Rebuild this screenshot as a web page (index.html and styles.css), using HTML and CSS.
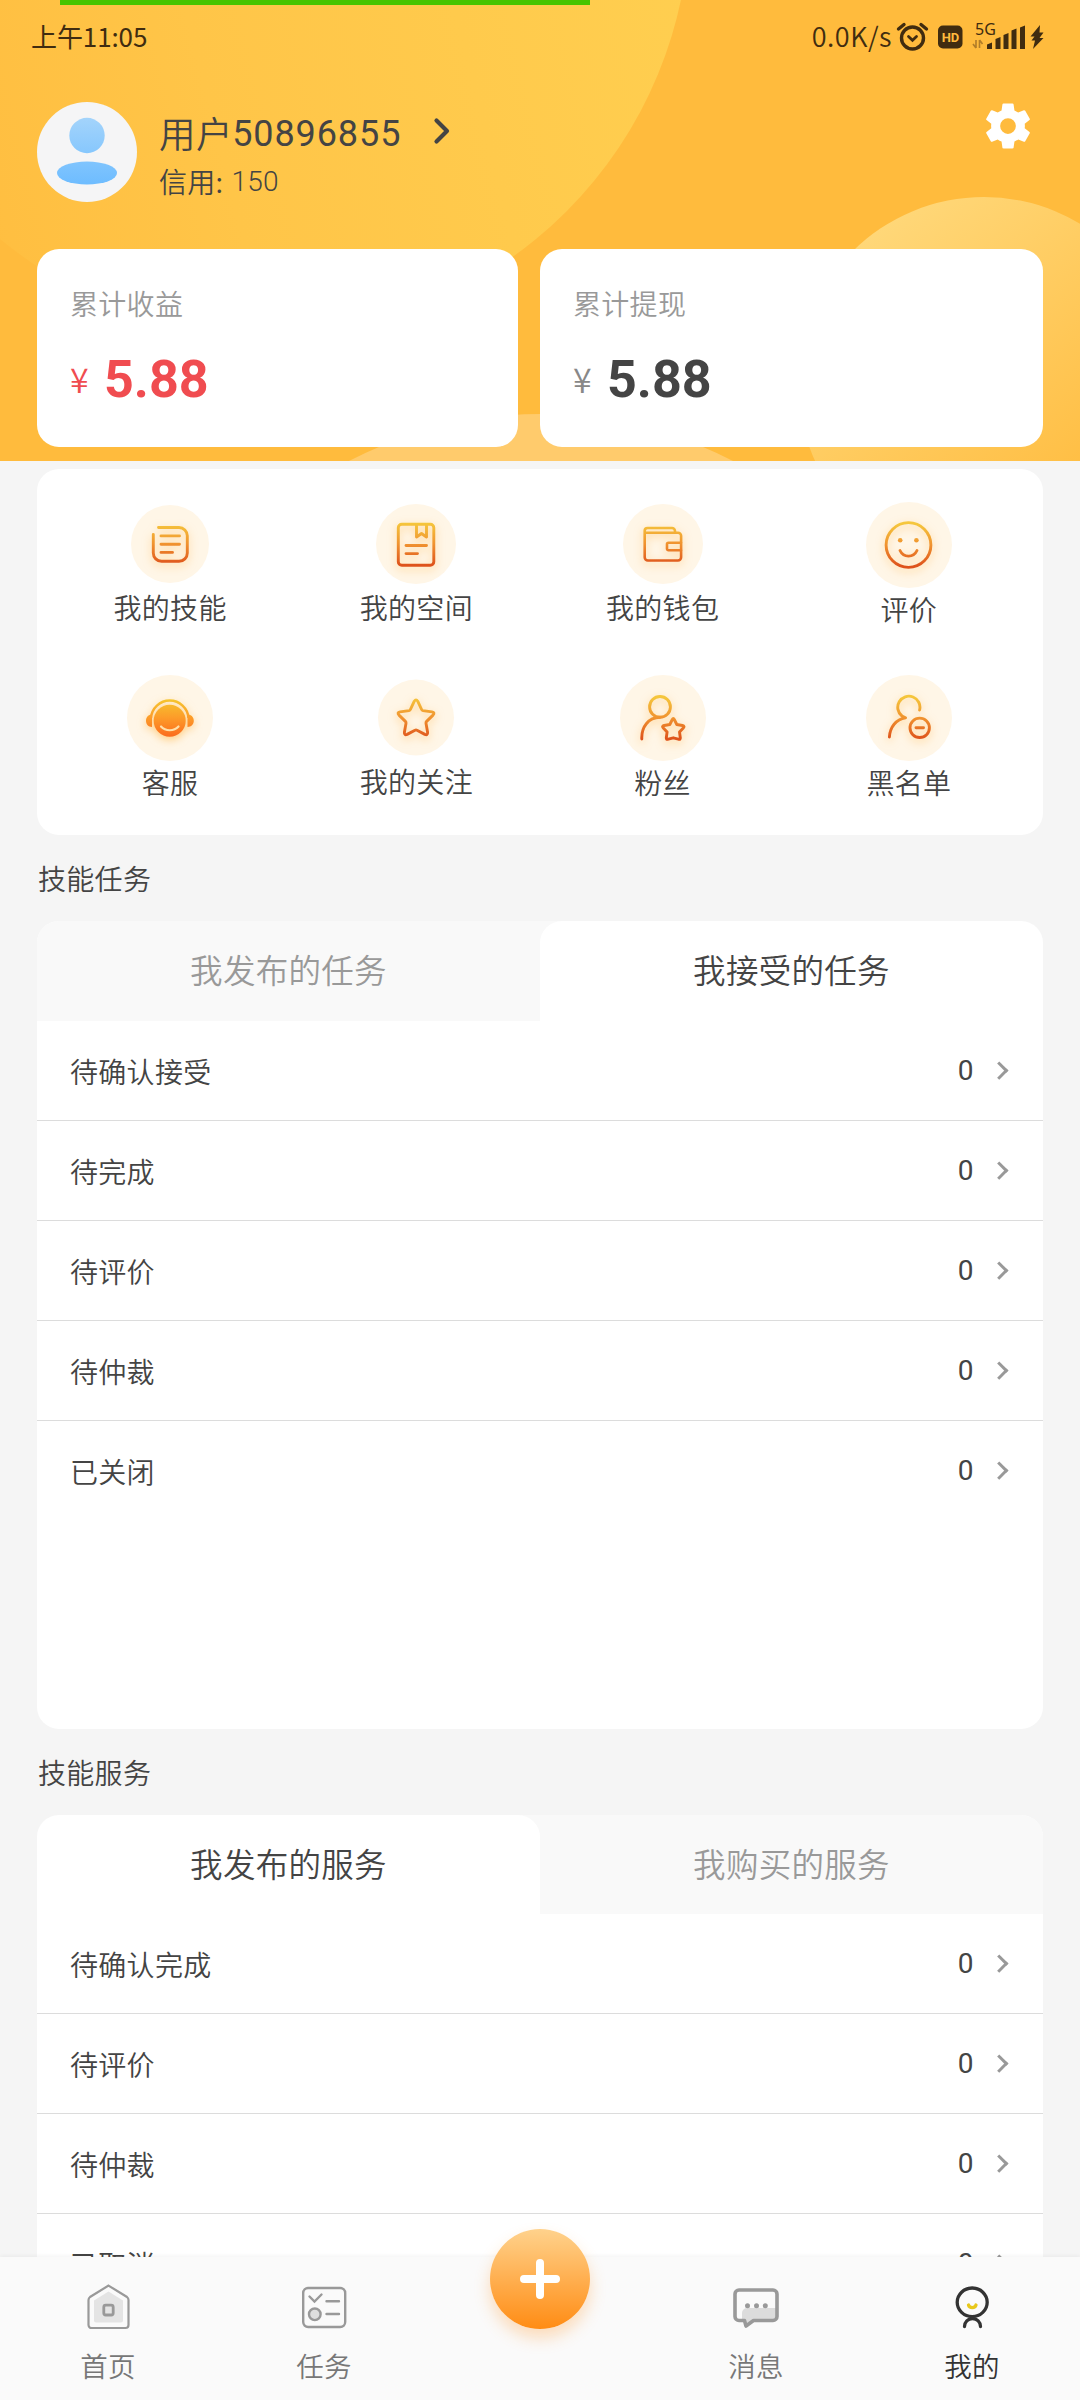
FILE: index.html
```html
<!DOCTYPE html>
<html lang="zh-CN">
<head>
<meta charset="utf-8">
<title>我的</title>
<link rel="stylesheet" href="styles.css">
</head>
<body>
<main class="page">
  <header class="hero">
    <svg class="hero-bg" viewBox="0 0 1080 461" aria-hidden="true">
      <defs>
        <linearGradient id="bubbleA" x1="0" y1=".7" x2="1" y2=".45"><stop offset=".1" stop-color="#ffbe40"/><stop offset=".4" stop-color="#ffc548"/><stop offset="1" stop-color="#ffcf50"/></linearGradient>
        <linearGradient id="bubbleB" x1=".2" y1=".1" x2=".8" y2=".85"><stop offset="0" stop-color="#ffd778"/><stop offset="1" stop-color="#ffbb3d"/></linearGradient>
      </defs>
      <circle cx="268" cy="-87" r="422" fill="url(#bubbleA)"/>
      <circle cx="984" cy="383" r="186" fill="url(#bubbleB)"/>
      <circle cx="541" cy="830" r="416" fill="#ffcb6c"/>
    </svg>
    <div class="progress"></div>

    <div class="status">
      <span class="status-time">上午11:05</span>
      <div class="status-right">
        <span class="status-speed">0.0K/s</span>
        <svg width="150" height="30" viewBox="0 0 150 30">
          <g fill="none" stroke="#402c10" stroke-linecap="round">
            <circle cx="16.500" cy="17" r="11" stroke-width="3.400"/>
            <path d="M12.500 15.500l4 3.800 4-3.800" stroke-width="2.800"/>
            <path d="M2.500 8l5.500-4.500M30.500 8l-5.500-4.500" stroke-width="3.400"/>
          </g>
          <rect x="42" y="4.500" width="24.500" height="23" rx="5" fill="#402c10"/>
          <text x="54.500" y="20.500" class="status-hd">HD</text>
          <text x="79" y="14" class="status-net">5G</text>
          <path d="M80 27v-8m0 8l-3-4M83.500 19v8m0-8l3 4" fill="none" stroke="#b07c28" stroke-width="1.600"/>
          <path d="M91 28v-4.500l5-2V28zM99.500 28V18l5-2v12zM107.500 28V14l5-2v16zM115.500 28V9.500l5-2V28zM124 28V6.500l5-2V28z" fill="#402c10"/>
          <path d="M144 4l-9.500 11.500h4l-3 4h3.500l-2 8.500L147.500 17h-4l4-5.500h-4z" fill="#402c10"/>
        </svg>
      </div>
    </div>

    <div class="profile">
      <svg class="avatar" width="100" height="100" viewBox="0 0 100 100">
        <defs><linearGradient id="av" gradientUnits="userSpaceOnUse" x1="0" y1="15" x2="0" y2="83"><stop stop-color="#a4d4fb"/><stop offset="1" stop-color="#6dbcff"/></linearGradient></defs>
        <circle cx="50" cy="50" r="50" fill="#f5f5f6"/>
        <circle cx="50" cy="33.500" r="17.700" fill="url(#av)"/>
        <ellipse cx="50" cy="71" rx="30" ry="11.500" fill="url(#av)"/>
      </svg>
      <div class="who">
        <div class="who-name"><span>用户</span><span class="num">50896855</span>
          <svg width="20" height="28" viewBox="0 0 20 28"><path d="M3.500 3.500L14 14 3.500 24.500" fill="none" stroke="#444" stroke-width="4.200" stroke-linecap="round" stroke-linejoin="round"/></svg>
        </div>
        <div class="who-credit"><span>信用:</span><span class="num thin">150</span></div>
      </div>
      <svg class="gear" width="54" height="54" viewBox="0 0 24 24"><path fill="#fff" d="M19.430 12.980c.040-.320.070-.640.070-.980s-.030-.660-.070-.980l2.110-1.650c.190-.150.240-.420.120-.640l-2-3.460c-.120-.220-.390-.300-.610-.220l-2.490 1c-.520-.400-1.080-.730-1.690-.980l-.380-2.650C14.460 2.180 14.250 2 14 2h-4c-.250 0-.460.180-.490.420l-.380 2.650c-.610.250-1.170.590-1.690.980l-2.490-1c-.230-.090-.490 0-.610.220l-2 3.460c-.130.220-.070.490.120.640l2.110 1.650c-.040.320-.070.650-.070.980s.030.660.070.980l-2.110 1.650c-.190.150-.240.420-.120.640l2 3.460c.120.220.390.300.610.220l2.490-1c.520.400 1.080.730 1.690.980l.380 2.650c.030.240.240.420.490.420h4c.250 0 .460-.180.490-.420l.380-2.650c.610-.250 1.170-.590 1.690-.980l2.490 1c.230.090.490 0 .610-.220l2-3.460c.120-.220.070-.490-.120-.640l-2.110-1.650zM12 15.500a3.500 3.500 0 1 1 0-7 3.500 3.500 0 0 1 0 7z"/></svg>
    </div>

    <div class="balances">
      <section class="balance earned">
        <h2>累计收益</h2>
        <p><span class="yen">¥</span><span class="sum">5.88</span></p>
      </section>
      <section class="balance withdrawn">
        <h2>累计提现</h2>
        <p><span class="yen">¥</span><span class="sum">5.88</span></p>
      </section>
    </div>
  </header>

  <nav class="menu">
    <a class="menu-item">
      <svg class="menu-icon" viewBox="0 0 86 86">
        <defs><linearGradient id="ink" gradientUnits="userSpaceOnUse" x1="0" y1="22" x2="0" y2="64"><stop offset="0" stop-color="#f5c63c"/><stop offset=".5" stop-color="#f0922f"/><stop offset="1" stop-color="#de521b"/></linearGradient></defs>
        <circle cx="43" cy="43" r="39" class="disc"/>
        <g class="ink"><path d="M31.500 26.500H52a8.300 8.300 0 0 1 8.300 8.300V52a8.300 8.300 0 0 1-8.300 8.300H34.600a8.300 8.300 0 0 1-8.300-8.300V33.500"/><path d="M34 34.900h18.500M34 43.200h18.500M34 51.400h11.500"/></g>
      </svg>
      <span>我的技能</span>
    </a>
    <a class="menu-item">
      <svg class="menu-icon" viewBox="0 0 86 86">
        <circle cx="43" cy="43" r="40" class="disc"/>
        <g class="ink"><rect x="25.300" y="23.300" width="35.500" height="41" rx="3.500"/><path d="M43.500 24v12l5-3.500 5 3.500V24M33 44.500h20.500M33 52.600h11.500"/></g>
      </svg>
      <span>我的空间</span>
    </a>
    <a class="menu-item">
      <svg class="menu-icon" viewBox="0 0 86 86">
        <circle cx="43" cy="43" r="40" class="disc"/>
        <g class="ink thin-ink"><path d="M55 31.500V30a3 3 0 0 0-3-3H27.500a2.800 2.800 0 0 0-2.800 2.800v26.500a3.200 3.200 0 0 0 3.200 3.200h30a3.200 3.200 0 0 0 3.200-3.200V34.700a3 3 0 0 0-3-3H25.500"/><path d="M61 41.700H48.500a1.500 1.500 0 0 0-1.500 1.500v4.500a1.500 1.500 0 0 0 1.500 1.500H61"/></g>
      </svg>
      <span>我的钱包</span>
    </a>
    <a class="menu-item large low">
      <svg class="menu-icon" viewBox="0 0 86 86">
        <circle cx="43" cy="43" r="43" class="disc"/>
        <g class="ink"><circle cx="42.500" cy="43" r="22.400"/><path d="M34 48.500c3.500 7.500 13.500 7.500 17 0"/></g>
        <circle cx="34.200" cy="38.300" r="2.300" fill="url(#ink)"/><circle cx="50.400" cy="38.300" r="2.300" fill="url(#ink)"/>
      </svg>
      <span>评价</span>
    </a>
    <a class="menu-item large">
      <svg class="menu-icon" viewBox="0 0 86 86">
        <defs><linearGradient id="face" gradientUnits="userSpaceOnUse" x1="0" y1="24" x2="0" y2="62"><stop offset="0" stop-color="#f5c62f"/><stop offset=".5" stop-color="#fd9b29"/><stop offset="1" stop-color="#fb6a1d"/></linearGradient></defs>
        <circle cx="43" cy="43" r="43" class="disc"/>
        <g class="glow" fill="url(#face)">
          <circle cx="42.700" cy="45.700" r="16"/>
          <path d="M25 39.500v12.400c-3.600-.1-6-2.600-6-6.200s2.400-6.200 6-6.200zM60.500 39.500v12.400c3.700-.1 6.300-2.600 6.300-6.200s-2.600-6.200-6.300-6.200z"/>
          <path d="M24 43a18.800 18.800 0 0 1 37.500 0" fill="none" stroke="url(#face)" stroke-width="2.500"/>
        </g>
        <path d="M34 51.500c4.500 5 13 5 17.500 0" fill="none" stroke="#ffe0a8" stroke-width="2.200" stroke-linecap="round"/>
      </svg>
      <span>客服</span>
    </a>
    <a class="menu-item">
      <svg class="menu-icon" viewBox="0 0 86 86">
        <circle cx="43" cy="42.500" r="38" class="disc"/>
        <g class="ink"><path d="M41.300 26.200Q43 23.500 44.700 26.200L48.600 34.500Q49 35.400 50 35.600L59 36.900Q62.300 37.600 60 40.100L53.600 46.400Q52.800 47.200 53 48.200L54.600 57.300Q54.800 60.600 51.900 59.400L44 55.200Q43 54.700 42 55.200L34.100 59.400Q31.200 60.600 31.400 57.300L33 48.200Q33.200 47.200 32.400 46.400L26 40.100Q23.700 37.600 27 36.900L36 35.600Q37 35.400 37.400 34.500Z"/></g>
      </svg>
      <span>我的关注</span>
    </a>
    <a class="menu-item large">
      <svg class="menu-icon" viewBox="0 0 86 86">
        <circle cx="43" cy="43" r="43" class="disc"/>
        <g class="ink"><circle cx="40" cy="31.900" r="10.400"/><path d="M21.800 64c-.5-12 6.500-21.500 18.200-21.700"/><path d="M52.300 44.500Q53.300 42.300 54.300 44.500L56.800 49.500L62.500 50.500Q65 51.300 63.300 53L59.500 57L60.300 62.700Q60.500 65 58.300 64.200L53.300 62.800L48.300 64.200Q46.100 65 46.300 62.700L47.100 57L43.300 53Q41.600 51.300 44.100 50.500L49.800 49.500Z"/></g>
      </svg>
      <span>粉丝</span>
    </a>
    <a class="menu-item large">
      <svg class="menu-icon" viewBox="0 0 86 86">
        <circle cx="43" cy="43" r="43" class="disc"/>
        <g class="ink"><path d="M53.600 35A11.100 11.100 0 1 0 36 41L39.500 42.800C30 44.500 24 52 23.400 62"/><circle cx="53.700" cy="52.800" r="9.700"/><path d="M50 52.800h7.500"/></g>
      </svg>
      <span>黑名单</span>
    </a>
  </nav>

  <h3 class="section-title">技能任务</h3>
  <section class="panel tasks">
    <div class="tabs"><div class="tab">我发布的任务</div><div class="tab active">我接受的任务</div></div>
    <div class="row"><span>待确认接受</span><b>0</b><i class="chev"></i></div>
    <div class="row"><span>待完成</span><b>0</b><i class="chev"></i></div>
    <div class="row"><span>待评价</span><b>0</b><i class="chev"></i></div>
    <div class="row"><span>待仲裁</span><b>0</b><i class="chev"></i></div>
    <div class="row last"><span>已关闭</span><b>0</b><i class="chev"></i></div>
  </section>

  <h3 class="section-title">技能服务</h3>
  <section class="panel services">
    <div class="tabs"><div class="tab active">我发布的服务</div><div class="tab">我购买的服务</div></div>
    <div class="row"><span>待确认完成</span><b>0</b><i class="chev"></i></div>
    <div class="row"><span>待评价</span><b>0</b><i class="chev"></i></div>
    <div class="row"><span>待仲裁</span><b>0</b><i class="chev"></i></div>
    <div class="row last"><span>已取消</span><b>0</b><i class="chev"></i></div>
  </section>
</main>

<footer class="tabbar">
  <a class="tabbar-item">
    <svg width="48" height="48" viewBox="0 0 48 48">
      <path d="M24.500 9.500L39 18.500V38.500a2 2 0 0 1-2 2H12a2 2 0 0 1-2-2V18.500z" fill="#e4e4e4"/>
      <path d="M24.500 3.600L43 15a4 4 0 0 1 1.500 3.200V43a3 3 0 0 1-3 3H7.500a3 3 0 0 1-3-3V18.200A4 4 0 0 1 6 15z" fill="none" stroke="#999" stroke-width="2.200"/>
      <rect x="19.800" y="23.200" width="9.400" height="9.800" rx="2" fill="#e4e4e4" stroke="#999" stroke-width="2.800"/>
    </svg>
    <span>首页</span>
  </a>
  <a class="tabbar-item">
    <svg width="48" height="48" viewBox="0 0 48 48" fill="none" stroke="#999" stroke-width="2.400" stroke-linecap="round">
      <rect x="3.200" y="6" width="42" height="39" rx="5"/>
      <path d="M9.500 14.500l5 5 7-7M26.500 19.300h12.500M26.500 32h12.500"/>
      <circle cx="14.800" cy="32.300" r="5.800" fill="#dedede"/>
    </svg>
    <span>任务</span>
  </a>
  <div class="tabbar-item">
    <div class="fab"><svg width="44" height="44" viewBox="0 0 44 44"><path d="M22 6v32M6 22h32" stroke="#fff" stroke-width="8" stroke-linecap="round"/></svg></div>
  </div>
  <a class="tabbar-item">
    <svg width="48" height="48" viewBox="0 0 48 48">
      <path d="M10 31a5 5 0 0 1 5-5H44v12H20l-7 5-3-5z" fill="#dcdcdc"/>
      <path d="M7 8h34a4 4 0 0 1 4 4v22.500a4 4 0 0 1-4 4H21.500l-7.500 5.500-1.500-5.500H7a4 4 0 0 1-4-4V12a4 4 0 0 1 4-4z" fill="none" stroke="#999" stroke-width="3.600" stroke-linejoin="round"/>
      <g fill="#999"><circle cx="15.500" cy="23.700" r="2.500"/><circle cx="24.500" cy="23.700" r="2.500"/><circle cx="33.300" cy="23.700" r="2.500"/></g>
    </svg>
    <span>消息</span>
  </a>
  <a class="tabbar-item current">
    <svg width="48" height="48" viewBox="0 0 48 48" fill="none" stroke="#333" stroke-width="3.300" stroke-linecap="round">
      <ellipse cx="24.200" cy="20.300" rx="15" ry="14.300"/>
      <path d="M16.500 44.500c0-4.500 3.500-8 8-8s8 3.500 8 8"/>
      <path d="M20.500 23c1 3.500 6.500 3.500 7.500 0" stroke="#e8c81c"/>
    </svg>
    <span>我的</span>
  </a>
</footer>
</body>
</html>
```
FILE: styles.css
```css
* { box-sizing: border-box; margin: 0; padding: 0; }

body {
  width: 1080px;
  height: 2400px;
  display: flex;
  flex-direction: column;
  overflow: hidden;
  background: #f5f5f5;
  color: #444;
  font-family: "Noto Sans CJK SC", "Noto Sans", sans-serif;
  font-size: 28px;
  font-weight: 350;
  letter-spacing: .3px;
}

.num, .sum, .row b { font-family: Roboto, sans-serif; }

.page { flex: 1; min-height: 0; overflow: hidden; }

/* header */
.hero {
  position: relative;
  height: 461px;
  background: #ffbb3d;
  isolation: isolate;
}
.hero-bg { position: absolute; inset: 0; z-index: -1; width: 1080px; height: 461px; }
.progress { position: absolute; left: 60px; top: 0; width: 530px; height: 5px; background: #48c400; }

.status {
  height: 75px;
  padding: 0 34px 4px 31px;
  display: flex;
  justify-content: space-between;
  align-items: center;
  color: #402c10;
}
.status-time { font-size: 26px; font-weight: 400; letter-spacing: -.1px; }
.status-right { display: flex; align-items: center; }
.status-speed { font-size: 27px; font-weight: 350; letter-spacing: .5px; margin-right: 4px; }
.status-hd { font: 700 13px Roboto, sans-serif; fill: #ffbb3d; text-anchor: middle; letter-spacing: 0; }
.status-net { font: 400 16px "Noto Sans", sans-serif; fill: #402c10; letter-spacing: 0; }

.profile {
  margin-top: 27px;
  height: 100px;
  padding: 0 45px 0 37px;
  display: flex;
}
.who { margin-left: 22px; flex: 1; }
.who-name {
  display: flex;
  align-items: center;
  height: 52px;
  margin-top: 5px;
  font-size: 36.5px;
  line-height: 52px;
  letter-spacing: .6px;
}
.who-name .num { font-weight: 400; font-size: 36px; margin-left: -1px; margin-top: 2px; letter-spacing: .9px; }
.who-name svg { margin-left: 32px; margin-top: -4px; }
.who-credit { display: flex; align-items: center; height: 44px; line-height: 44px; }
.who-credit .num { margin-left: 8px; margin-top: 2px; }
.thin { font-weight: 300; }
.gear { margin-top: -3px; }

.balances {
  margin-top: 47px;
  padding: 0 37px;
  display: grid;
  grid-template-columns: 481px 503px;
  gap: 22px;
}
.balance {
  height: 198px;
  padding: 33px;
  background: #fff;
  border-radius: 22px;
}
.balance h2 { font-size: 28px; line-height: 42px; font-weight: 350; color: #999; }
.balance p { display: flex; align-items: center; height: 60px; margin-top: 25px; }
.yen { font-size: 34px; line-height: 60px; width: 34px; color: #888; }
.sum { font-size: 52px; line-height: 60px; font-weight: 700; letter-spacing: 0; color: #444; padding-top: 1px; }
.earned .yen, .earned .sum { color: #f04c50; }

/* shortcuts */
.menu {
  margin: 8px 37px 0;
  height: 366px;
  padding: 32px 11px 0 10px;
  display: grid;
  grid-template-columns: repeat(4, 1fr);
  grid-template-rows: 174px 174px;
  background: #fff;
  border-radius: 22px;
}
.menu-item { display: flex; flex-direction: column; align-items: center; line-height: 41px; }
.menu-item.low { padding-top: 1px; }
.menu-item.large span { padding-top: 1px; }
.menu-icon { width: 86px; height: 86px; }
.disc { fill: #fff6e7; }
.ink {
  fill: none;
  stroke: url(#ink);
  stroke-width: 2.9;
  stroke-linecap: round;
  stroke-linejoin: round;
  filter: drop-shadow(0 3px 4px rgba(255, 178, 60, .5));
}
.thin-ink { stroke-width: 2.6; }
.glow { filter: drop-shadow(0 3px 4px rgba(255, 178, 60, .6)); }

/* sections */
.section-title {
  height: 86px;
  line-height: 87px;
  padding-left: 38px;
  font-size: 28px;
  font-weight: 350;
}
.panel { margin: 0 37px; background: #fff; border-radius: 22px; overflow: hidden; }
.tasks { height: 808px; }
.tabs { display: flex; height: 100px; background: #f9f9f9; }
.services .tabs { height: 99px; }
.tab {
  flex: 1;
  text-align: center;
  font-size: 32.5px;
  line-height: 96px;
  color: #999;
}
.tab.active { background: #fff; color: #444; border-radius: 22px 22px 0 0; }
.row {
  height: 100px;
  padding: 0 33px;
  display: flex;
  align-items: center;
  border-bottom: 1px solid #dcdcdc;
}
.row.last { border-bottom-color: transparent; }
.row span { flex: 1; }
.row b { font-weight: 400; letter-spacing: 0; margin-right: 21px; }
.chev {
  width: 12.5px;
  height: 12.5px;
  margin-right: 3px;
  border: solid #999;
  border-width: 3px 3px 0 0;
  transform: translateX(-2px) rotate(45deg);
}

/* bottom bar */
.tabbar {
  position: relative;
  flex: none;
  height: 143px;
  display: grid;
  grid-template-columns: repeat(5, 1fr);
  background: #fafafa;
  box-shadow: 0 -1px 4px rgba(0, 0, 0, .05);
}
.tabbar-item {
  display: flex;
  flex-direction: column;
  align-items: center;
  gap: 15px;
  padding-top: 25px;
  font-size: 27.5px;
  line-height: 40px;
  color: #777;
}
.tabbar-item.current { color: #333; }
.fab {
  display: grid;
  place-items: center;
  width: 100px;
  height: 100px;
  margin-top: -53px;
  border-radius: 50%;
  background: linear-gradient(#ffd28c, #ff8c14);
  box-shadow: 0 9px 16px rgba(255, 150, 40, .3);
}
```
